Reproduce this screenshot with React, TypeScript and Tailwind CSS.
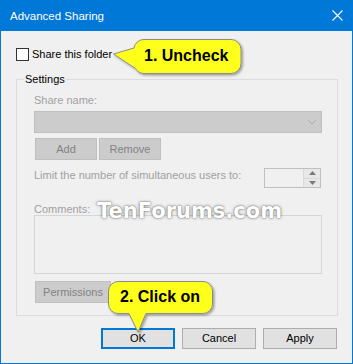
export default function App() {
  const ui = { fontFamily: '"Liberation Sans", Arial, sans-serif' };
  const bold = { fontFamily: '"Liberation Sans", Arial, sans-serif' };

  return (
    <div className="relative flex h-[364px] w-[353px] flex-col border-x border-b border-[#0078d7] bg-[#f0f0f0] text-[11px] text-black" style={ui}>
      {/* title bar */}
      <div className="flex h-[31px] shrink-0 items-center justify-between bg-[#0078d7] pl-[9px] pr-[9px] text-[11.5px] text-white">
        <span className="leading-[16px]">Advanced Sharing</span>
        <svg width="11" height="11" viewBox="0 0 11 11" className="mb-[1px]">
          <path d="M0.5 0.5 L10.5 10.5 M10.5 0.5 L0.5 10.5" stroke="#fff" strokeWidth="1.1" />
        </svg>
      </div>

      <div className="flex flex-col pl-[15px] pr-[14px]">
        {/* share checkbox */}
        <div className="mt-[15px] flex items-center gap-[3px]">
          <div className="h-[13px] w-[13px] border border-[#333] bg-white" />
          <span className="leading-[16px]">Share this folder</span>
        </div>

        {/* settings group */}
        <fieldset className="mt-[9px] border border-[#dcdcdc] pb-[12px] pl-[17px] pr-[15px]">
          <legend className="ml-[-10px] px-[1px] leading-[16px]">Settings</legend>

          <div className="mt-[5px] leading-[16px] text-[#a0a0a0]">Share name:</div>
          <div className="mt-[3px] flex h-[22px] items-center justify-end border border-[#bfbfbf] bg-[#cccccc] pr-[5px]">
            <svg width="8" height="5" viewBox="0 0 8 5">
              <path d="M0.5 0.5 L4 4 L7.5 0.5" stroke="#a6a6a6" fill="none" />
            </svg>
          </div>

          <div className="mt-[5px] flex gap-[2px] pl-[1px]">
            <div className="flex h-[22px] w-[62px] items-center justify-center border border-[#bfbfbf] bg-[#cccccc] text-[#838383]">Add</div>
            <div className="flex h-[22px] w-[62px] items-center justify-center border border-[#bfbfbf] bg-[#cccccc] text-[#838383]">Remove</div>
          </div>

          <div className="mt-[8px] flex items-start justify-between pr-[1px]">
            <span className="mt-[-1px] whitespace-nowrap leading-[16px] text-[#a0a0a0]">Limit the number of simultaneous users to:</span>
            <div className="flex h-[20px] w-[57px] border border-[#bfbfbf] bg-[#f0f0f0]">
              <div className="flex-1" />
              <div className="flex w-[17px] flex-col border-l border-[#d9d9d9] bg-[#e8e8e8]">
                <div className="flex flex-1 items-center justify-center border-b border-[#d9d9d9]">
                  <svg width="7" height="4" viewBox="0 0 7 4"><path d="M3.5 0 L7 4 L0 4 Z" fill="#7a7a7a" /></svg>
                </div>
                <div className="flex flex-1 items-center justify-center">
                  <svg width="7" height="4" viewBox="0 0 7 4"><path d="M0 0 L7 0 L3.5 4 Z" fill="#7a7a7a" /></svg>
                </div>
              </div>
            </div>
          </div>

          <div className="mt-[15px] leading-[12px] text-[#a0a0a0]">Comments:</div>
          <div className="h-[59px] border border-[#d5d5d5] bg-[#f0f0f0]" />

          <div className="mt-[7px] pl-[1px]">
            <div className="flex h-[22px] w-[76px] items-center justify-center border border-[#bfbfbf] bg-[#cccccc] text-[#838383]">Permissions</div>
          </div>
        </fieldset>

        {/* dialog buttons */}
        <div className="mt-[12px] flex justify-end gap-[7px] pr-[1px]">
          <div className="flex h-[21px] w-[74px] items-center justify-center border-2 border-[#0078d7] bg-[#e1e1e1]">OK</div>
          <div className="flex h-[21px] w-[74px] items-center justify-center border border-[#adadad] bg-[#e1e1e1]">Cancel</div>
          <div className="flex h-[21px] w-[74px] items-center justify-center border border-[#adadad] bg-[#e1e1e1]">Apply</div>
        </div>
      </div>

      {/* watermark */}
      <div
        className="pointer-events-none absolute left-[96px] top-[199px] text-[21px] font-bold leading-[24px] text-white [text-shadow:0_0_3px_rgba(0,0,0,0.55),0_0_1px_rgba(0,0,0,0.4)]"
        style={{ fontFamily: '"DejaVu Sans", Verdana, sans-serif' }}
      >
        TenForums.com
      </div>

      {/* callout 1 */}
      <div className="absolute left-[109px] top-[35px] h-[44px] w-[138px]">
        <svg width="138" height="44" viewBox="0 0 138 44" className="absolute inset-0">
          <defs>
            <filter id="sh1" x="-10%" y="-20%" width="130%" height="160%">
              <feDropShadow dx="1.5" dy="1.5" stdDeviation="1.2" floodColor="#000" floodOpacity="0.35" />
            </filter>
          </defs>
          <path
            d="M34 4.5 H121 A10 10 0 0 1 131 14.5 V28.5 A10 10 0 0 1 121 38.5 H34 A10 10 0 0 1 25.5 33.5 L3.5 19 L24 13 A10 10 0 0 1 34 4.5 Z"
            fill="#ffff1a"
            stroke="#8c8c8c"
            strokeWidth="1"
            filter="url(#sh1)"
          />
        </svg>
        <span className="absolute left-[34px] top-[12px] text-[16px] font-bold leading-[18px]" style={bold}>1. Uncheck</span>
      </div>

      {/* callout 2 */}
      <div className="absolute left-[103px] top-[277px] h-[60px] w-[115px]">
        <svg width="115" height="60" viewBox="0 0 115 60" className="absolute inset-0">
          <defs>
            <filter id="sh2" x="-10%" y="-20%" width="130%" height="150%">
              <feDropShadow dx="1.5" dy="1.5" stdDeviation="1.2" floodColor="#000" floodOpacity="0.35" />
            </filter>
          </defs>
          <path
            d="M14 4.5 H99 A9.5 9.5 0 0 1 108.5 14 V27 A9.5 9.5 0 0 1 99 36.5 H42 L34 55 L25 36.5 H14 A9.5 9.5 0 0 1 4.5 27 V14 A9.5 9.5 0 0 1 14 4.5 Z"
            fill="#ffff1a"
            stroke="#8c8c8c"
            strokeWidth="1"
            filter="url(#sh2)"
          />
        </svg>
        <span className="absolute left-[16px] top-[11px] text-[16px] font-bold leading-[18px]" style={bold}>2. Click on</span>
      </div>
    </div>
  );
}
